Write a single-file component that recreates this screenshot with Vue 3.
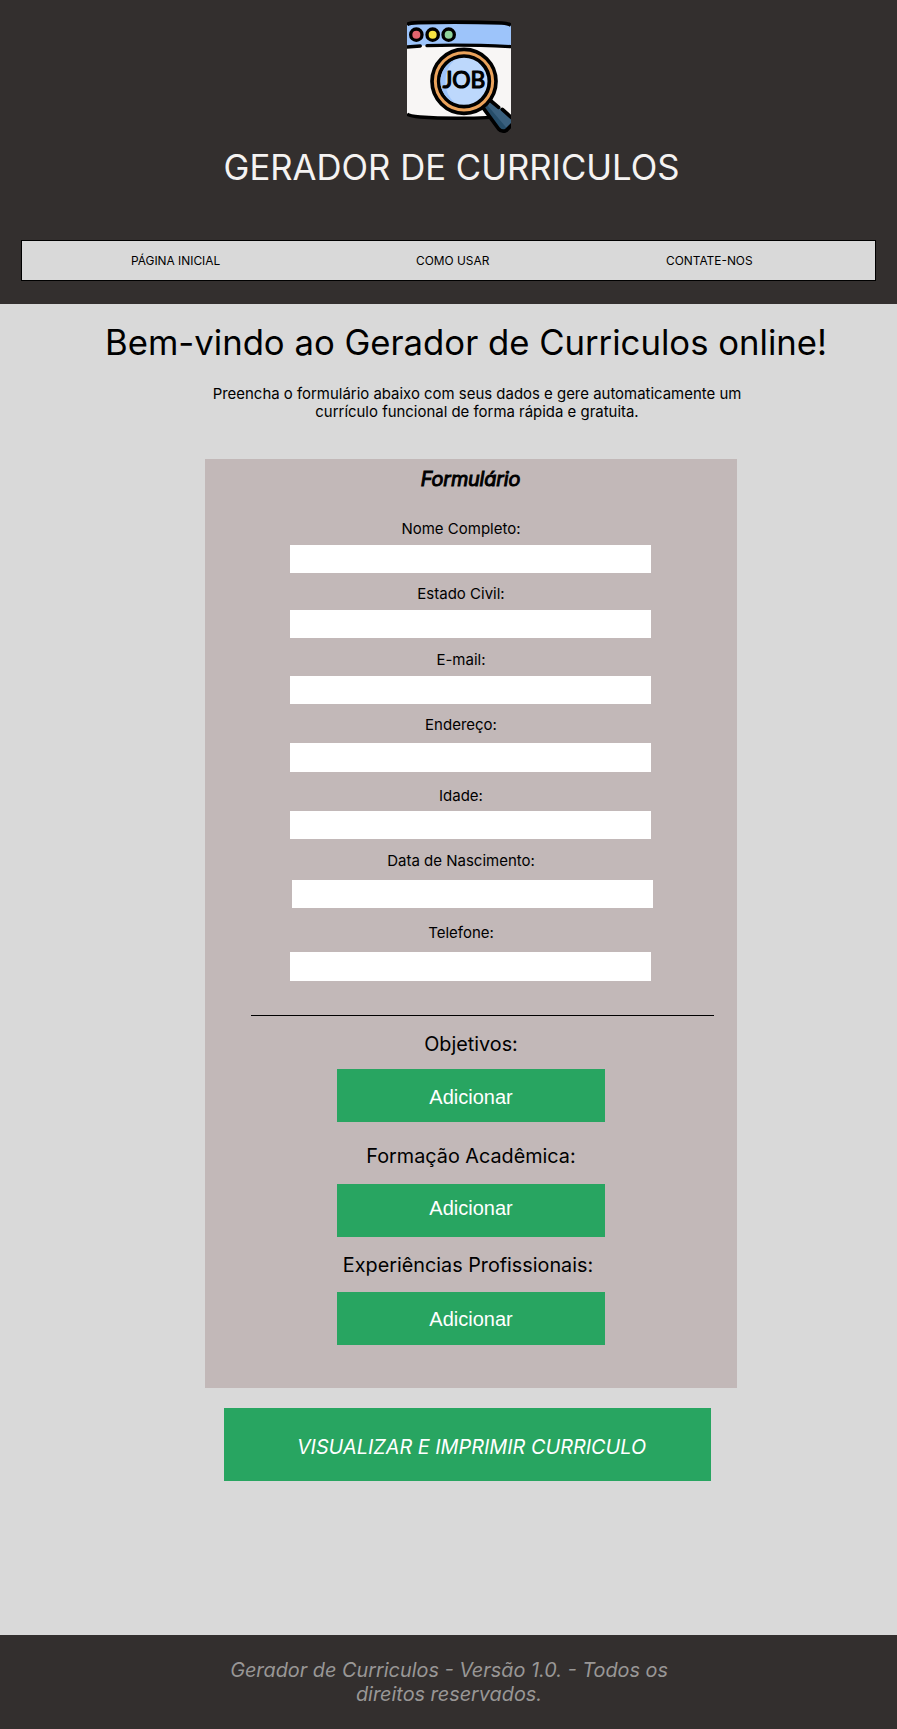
<script setup>
const links = ['PÁGINA INICIAL', 'COMO USAR', 'CONTATE-NOS']

const fields = [
  { id: 'nome', label: 'Nome Completo:' },
  { id: 'civil', label: 'Estado Civil:' },
  { id: 'email', label: 'E-mail:' },
  { id: 'endereco', label: 'Endereço:' },
  { id: 'idade', label: 'Idade:' },
  { id: 'nascimento', label: 'Data de Nascimento:' },
  { id: 'telefone', label: 'Telefone:' },
]

const sections = [
  { id: 'objetivos', label: 'Objetivos:' },
  { id: 'formacao', label: 'Formação Acadêmica:' },
  { id: 'experiencias', label: 'Experiências Profissionais:' },
]
</script>

<template>
  <div class="page">
    <header class="header">
      <svg class="logo" viewBox="36 30 312 342" aria-hidden="true">
        <path d="M36 105 L36 314 Q60 320 130 323 Q230 327 348 319 L348 105Z" fill="#f8f6f5" />
        <path d="M36 42 Q190 34 348 44 L348 110 Q190 100 36 109Z" fill="#9dc4fa" />
        <path d="M36 44 Q42 39 70 38 Q190 34 320 39 Q340 40 348 46" fill="none" stroke="#000" stroke-width="11" />
        <path d="M36 111 L76 108 M96 107 Q200 103 348 110" fill="none" stroke="#000" stroke-width="10" stroke-linecap="round" />
        <path d="M36 312 Q42 318 75 321 Q170 328 292 322" fill="none" stroke="#000" stroke-width="10" />
        <g stroke="#000" stroke-width="10">
          <circle cx="64" cy="74" r="17" fill="#e3646e" />
          <circle cx="113" cy="74" r="17" fill="#f6e341" />
          <circle cx="161" cy="74" r="17" fill="#8fd39b" />
        </g>
        <path d="M266 295 L290 274 L350 323 L350 346 L334 362 Q324 367 314 358Z" fill="#3a607e" />
        <path d="M266 295 L277 286 L338 358 L330 364 Q322 366 314 358Z" fill="#264d69" />
        <path d="M264 293 L311 357 Q321 368 334 361 L352 343 M288 273 L311 292 M322 298 L352 325" fill="none" stroke="#000" stroke-width="11" stroke-linecap="round" stroke-linejoin="round" />
        <circle cx="207" cy="214" r="96" fill="#eaa25b" stroke="#000" stroke-width="11" />
        <circle cx="207" cy="214" r="76" fill="#bdd8fc" stroke="#000" stroke-width="11" />
        <path d="M180 149 A70 70 0 0 0 180 279 Q151 255 151 214 Q151 173 180 149Z" fill="#9dc4fa" />
        <text class="logo-text" x="143" y="235" textLength="128" lengthAdjust="spacingAndGlyphs">JOB</text>
      </svg>
      <h1 class="title">GERADOR DE CURRICULOS</h1>
      <nav class="nav">
        <a v-for="link in links" :key="link" class="nav-link">{{ link }}</a>
      </nav>
    </header>

    <main class="main">
      <h2 class="welcome">Bem-vindo ao Gerador de Curriculos online!</h2>
      <p class="intro">
        Preencha o formulário abaixo com seus dados e gere automaticamente um<br />currículo funcional de forma rápida e gratuita.
      </p>

      <form class="panel" @submit.prevent>
        <h3 class="panel-title">Formulário</h3>
        <div class="fields">
          <div v-for="f in fields" :key="f.id" class="field" :class="f.id">
            <label class="label" :for="f.id">{{ f.label }}</label>
            <input :id="f.id" class="input" type="text" />
          </div>
        </div>
        <hr class="rule" />
        <section v-for="s in sections" :key="s.id" class="section" :class="s.id">
          <h4 class="section-title">{{ s.label }}</h4>
          <button class="add" type="button">Adicionar</button>
        </section>
      </form>

      <button class="print" type="button">VISUALIZAR E IMPRIMIR CURRICULO</button>
    </main>

    <footer class="footer">
      Gerador de Curriculos - Versão 1.0. - Todos os<br />direitos reservados.
    </footer>
  </div>
</template>

<style>
body {
  margin: 0;
  background: #d9d9d9;
}
</style>

<style scoped>
.page {
  display: flex;
  flex-direction: column;
  width: 897px;
  height: 1729px;
  overflow: hidden;
  background: #d9d9d9;
  color: #000;
  font-family: Inter, sans-serif;
}
h1, h2, h3, h4, p {
  margin: 0;
  font-weight: 400;
}
button {
  border: 0;
  font-family: inherit;
}
.header {
  box-sizing: border-box;
  display: flex;
  flex-direction: column;
  height: 304px;
  padding: 20px 21px 0;
  background: #332f2e;
}
.logo {
  width: 104px;
  height: 114px;
  margin-left: 386px;
}
.logo-text {
  font-family: Lato, sans-serif;
  font-size: 67px;
  font-weight: 400;
  stroke: #000;
  stroke-width: 3.5;
  stroke-linecap: round;
  stroke-linejoin: round;
}
.title {
  margin-top: 11px;
  padding-left: 6px;
  font-size: 34.7px;
  line-height: 44px;
  text-align: center;
  color: #f5f3f2;
}
.nav {
  box-sizing: border-box;
  display: flex;
  height: 41px;
  margin-top: 51px;
  padding: 12px 0 0 109px;
  border: 1px solid #000;
  background: #d9d9d9;
  font-size: 11.9px;
  line-height: 15px;
}
.nav-link:nth-child(1) {
  width: 285px;
}
.nav-link:nth-child(2) {
  width: 250px;
}
.main {
  flex: 1;
}
.welcome {
  margin-top: 16px;
  padding-left: 35px;
  font-size: 34.7px;
  line-height: 44px;
  text-align: center;
  white-space: nowrap;
}
.intro {
  margin-top: 21px;
  padding-left: 57px;
  font-size: 14.95px;
  line-height: 18px;
  text-align: center;
}
.panel {
  display: flex;
  flex-direction: column;
  align-items: center;
  width: 532px;
  height: 929px;
  margin: 38px 0 0 205px;
  background: #c2b8b8;
}
.panel-title {
  margin-top: 8px;
  margin-right: 1px;
  font-size: 19.8px;
  font-style: italic;
  letter-spacing: -0.16px;
  line-height: 24px;
  -webkit-text-stroke: 1px #000;
}
.fields {
  width: 361px;
  margin-top: 28px;
  margin-right: 1px;
}
.field {
  display: flex;
  flex-direction: column;
  gap: 7px;
}
.label {
  margin-right: 19px;
  font-size: 15px;
  line-height: 19px;
  text-align: center;
}
.input {
  box-sizing: border-box;
  width: 361px;
  height: 28px;
  padding: 0 8px;
  border: 0;
  background: #fff;
}
.civil,
.endereco {
  margin-top: 11px;
}
.email,
.nascimento {
  margin-top: 12px;
}
.endereco {
  gap: 9px;
}
.idade {
  gap: 6px;
  margin-top: 14px;
}
.nascimento {
  gap: 10px;
}
.nascimento .input {
  margin-left: 2px;
}
.telefone {
  gap: 10px;
  margin-top: 15px;
}
.endereco .input,
.telefone .input {
  height: 29px;
}
.rule {
  width: 463px;
  height: 1px;
  margin: 34px 0 0 23px;
  border: 0;
  background: #000;
}
.section {
  display: flex;
  flex-direction: column;
  align-items: center;
}
.section-title {
  font-size: 19.8px;
  line-height: 24px;
}
.add {
  width: 268px;
  height: 53px;
  padding: 0;
  background: #28a561;
  color: #fff;
  font-family: "Liberation Sans", Arial, sans-serif;
  font-size: 20px;
  line-height: 24px;
}
.objetivos {
  gap: 13px;
  margin-top: 16px;
}
.objetivos .add {
  padding-top: 3px;
}
.formacao {
  gap: 16px;
  margin-top: 22px;
}
.formacao .add {
  padding-bottom: 5px;
}
.experiencias {
  gap: 15px;
  margin-top: 16px;
}
.experiencias .section-title {
  margin-right: 6px;
}
.print {
  display: block;
  width: 487px;
  height: 73px;
  margin: 20px 0 0 224px;
  padding: 5px 0 0 8px;
  background: #28a561;
  color: #fff;
  font-size: 19.85px;
  font-style: italic;
  line-height: 24px;
}
.footer {
  box-sizing: border-box;
  height: 94px;
  padding: 23px 0 0 1px;
  background: #332f2e;
  color: #999796;
  font-size: 19.85px;
  font-style: italic;
  line-height: 24px;
  text-align: center;
}
</style>
